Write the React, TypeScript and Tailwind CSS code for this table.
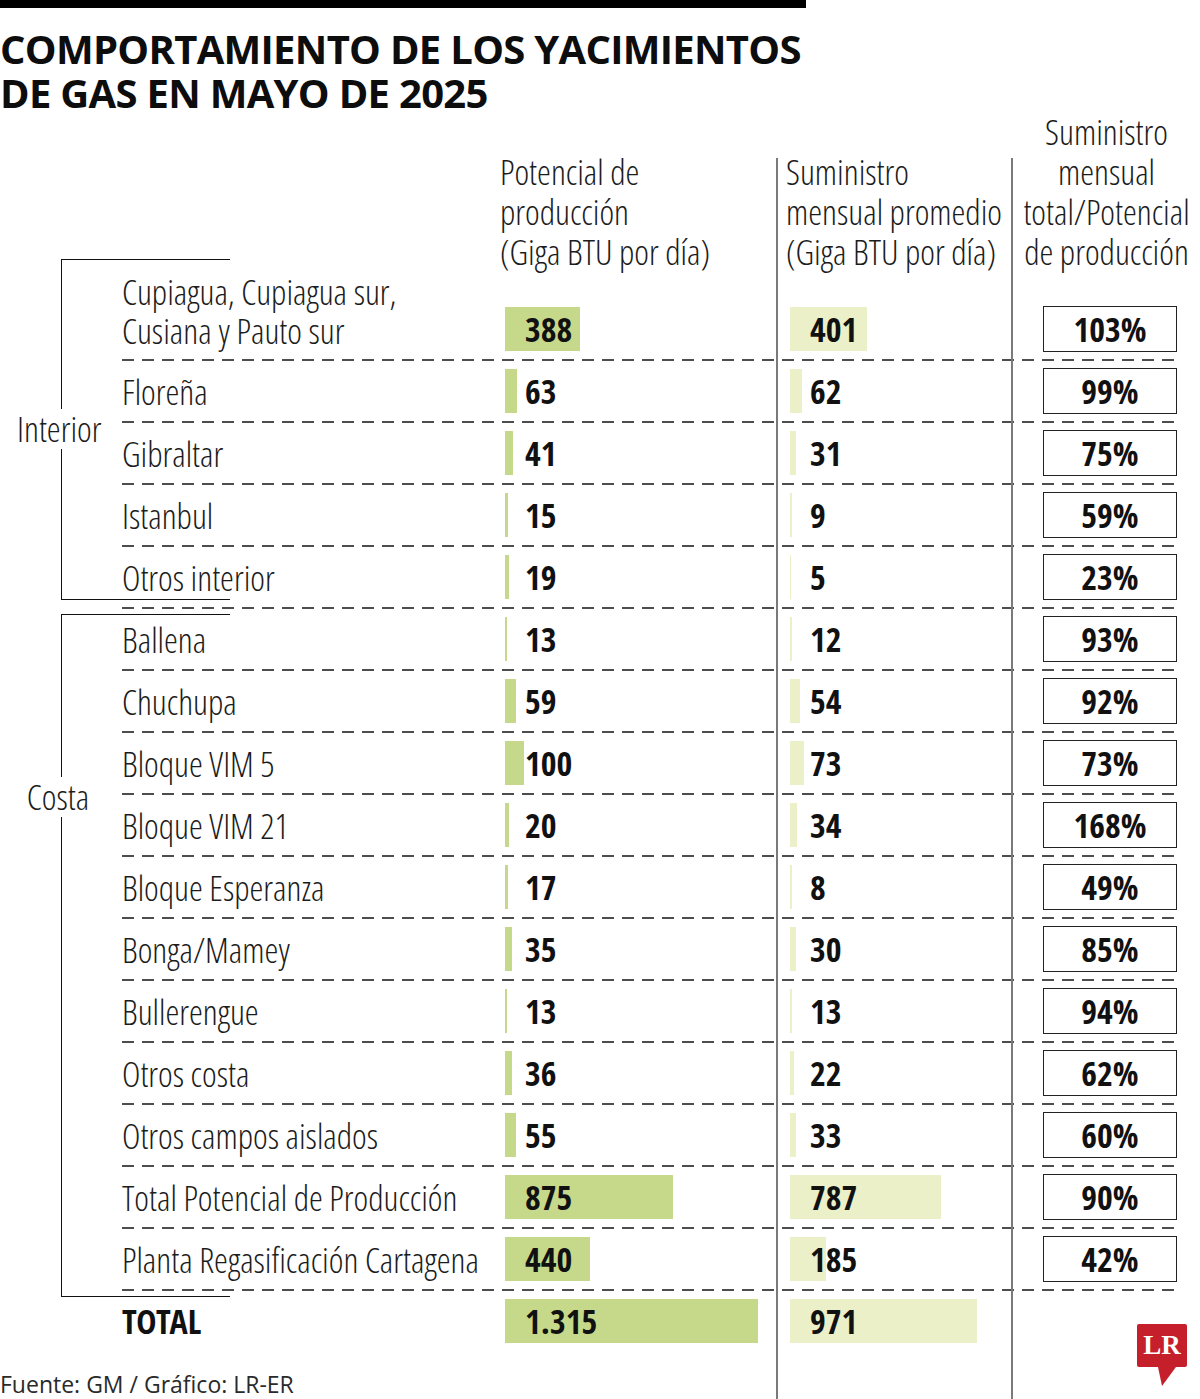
import React from "react"

type Row = {
  name: string[]
  p: number
  pLabel: string
  s: number
  r?: string
  bold?: boolean
}

const rows: Row[] = [
  { name: ["Cupiagua, Cupiagua sur,", "Cusiana y Pauto sur"], p: 388, pLabel: "388", s: 401, r: "103%" },
  { name: ["Floreña"], p: 63, pLabel: "63", s: 62, r: "99%" },
  { name: ["Gibraltar"], p: 41, pLabel: "41", s: 31, r: "75%" },
  { name: ["Istanbul"], p: 15, pLabel: "15", s: 9, r: "59%" },
  { name: ["Otros interior"], p: 19, pLabel: "19", s: 5, r: "23%" },
  { name: ["Ballena"], p: 13, pLabel: "13", s: 12, r: "93%" },
  { name: ["Chuchupa"], p: 59, pLabel: "59", s: 54, r: "92%" },
  { name: ["Bloque VIM 5"], p: 100, pLabel: "100", s: 73, r: "73%" },
  { name: ["Bloque VIM 21"], p: 20, pLabel: "20", s: 34, r: "168%" },
  { name: ["Bloque Esperanza"], p: 17, pLabel: "17", s: 8, r: "49%" },
  { name: ["Bonga/Mamey"], p: 35, pLabel: "35", s: 30, r: "85%" },
  { name: ["Bullerengue"], p: 13, pLabel: "13", s: 13, r: "94%" },
  { name: ["Otros costa"], p: 36, pLabel: "36", s: 22, r: "62%" },
  { name: ["Otros campos aislados"], p: 55, pLabel: "55", s: 33, r: "60%" },
  { name: ["Total Potencial de Producción"], p: 875, pLabel: "875", s: 787, r: "90%" },
  { name: ["Planta Regasificación Cartagena"], p: 440, pLabel: "440", s: 185, r: "42%" },
  { name: ["TOTAL"], p: 1315, pLabel: "1.315", s: 971, bold: true },
]

// px per Giga BTU
const SCALE = 0.1923

const narrow = "font-['Open_Sans_Condensed','Open_Sans',sans-serif] font-stretch-condensed font-bold"
const light = "font-['Open_Sans',sans-serif] font-stretch-condensed font-light"
const dash =
  "bg-[repeating-linear-gradient(to_right,#4d4d4d_0px,#4d4d4d_12px,transparent_12px,transparent_20px)] bg-no-repeat bg-[length:1058px_2px] bg-[position:0_100%]"

const Bar = ({ value, label, color }: { value: number; label: string; color: string }) => (
  <div className="grid">
    <div className={`col-start-1 row-start-1 h-[44px] ${color}`} style={{ width: Math.max(1, value * SCALE) }} />
    <div className={`col-start-1 row-start-1 self-center pl-[20px] text-[34px] leading-none text-[#111] ${narrow}`}>
      {label}
    </div>
  </div>
)

const DataRow = ({ row, index, last }: { row: Row; index: number; last: boolean }) => {
  const first = index === 0
  const align = first ? "items-end pb-[10px]" : "items-center pb-[2px]"
  return (
    <div className={`flex ${first ? "h-[89px]" : "h-[62px]"} ${last ? "" : dash}`}>
      <div
        className={`flex w-[378px] whitespace-nowrap ${first ? "items-start" : "items-center pb-[2px]"} ${
          row.bold ? `text-[34px] text-[#111] ${narrow}` : `text-[35px] leading-[39px] text-[#1c1c1c] ${light}`
        }`}
      >
        <div>
          {row.name.map((n) => (
            <div key={n}>{n}</div>
          ))}
        </div>
      </div>
      <div className={`flex w-[276px] pl-[5px] ${align}`}>
        <Bar value={row.p} label={row.pLabel} color="bg-[#c6d98b]" />
      </div>
      <div className={`flex w-[235px] border-l-2 border-[#7a7a7a] pl-[12px] ${align}`}>
        <Bar value={row.s} label={String(row.s)} color="bg-[#ebf0c9]" />
      </div>
      <div className={`flex w-[189px] border-l-2 border-[#7a7a7a] pl-[30px] ${first ? "items-end pb-[9px]" : "items-center pb-[2px]"}`}>
        {row.r && (
          <div
            className={`flex h-[46px] w-[134px] items-center justify-center border-[1.5px] border-[#222] text-[34px] leading-none text-[#111] ${narrow}`}
          >
            {row.r}
          </div>
        )}
      </div>
    </div>
  )
}

const Bracket = ({ label, height, labelTop }: { label: string; height: string; labelTop: string }) => (
  <div className={`ml-[61px] w-[169px] border-y-[1.5px] border-l-[1.5px] border-[#111] ${height}`}>
    <div
      className={`-ml-[45px] w-[82px] bg-white text-center text-[35px] leading-[40px] text-[#1c1c1c] ${light} ${labelTop}`}
    >
      {label}
    </div>
  </div>
)

const LrLogo = () => (
  <div className="flex flex-col">
    <div className="flex h-[43px] w-[50px] items-center justify-center rounded-[2px] bg-[#c61f2c] font-['Liberation_Serif',serif] text-[27px] font-bold leading-none text-white">
      LR
    </div>
    <svg width="50" height="19" viewBox="0 0 50 19">
      <polygon points="21,0 39,0 25,19" fill="#c61f2c" />
    </svg>
  </div>
)

export default function App() {
  return (
    <div className="h-[1399px] w-[1200px] overflow-hidden bg-white">
      <div className="h-[8px] w-[806px] bg-black" />
      <div className="h-[105px] pt-[19px]">
        <h1 className="font-['Open_Sans',sans-serif] text-[40px] font-bold leading-[44px] tracking-[-0.7px] text-[#0d0d0d]">
          COMPORTAMIENTO DE LOS YACIMIENTOS
          <br />
          DE GAS EN MAYO DE 2025
        </h1>
      </div>

      <div className="flex">
        <div className="w-[122px] shrink-0 pt-[146px]">
          <Bracket label="Interior" height="h-[341px]" labelTop="mt-[149px]" />
          <div className="h-[14px]" />
          <Bracket label="Costa" height="h-[683px]" labelTop="mt-[162px]" />
        </div>

        <div className="w-[1078px]">
          <div className={`flex h-[159px] whitespace-nowrap text-[35px] leading-[40px] text-[#1c1c1c] ${light}`}>
            <div className="w-[378px]" />
            <div className="flex w-[276px] flex-col justify-end">
              <div>Potencial de</div>
              <div>producción</div>
              <div>(Giga BTU por día)</div>
            </div>
            <div className="mt-[45px] flex w-[235px] flex-col justify-end border-l-2 border-[#7a7a7a] pl-[8px]">
              <div>Suministro</div>
              <div>mensual promedio</div>
              <div>(Giga BTU por día)</div>
            </div>
            <div className="mt-[45px] flex w-[189px] flex-col items-center justify-end border-l-2 border-[#7a7a7a]">
              <div>Suministro</div>
              <div>mensual</div>
              <div>total/Potencial</div>
              <div>de producción</div>
            </div>
          </div>

          {rows.map((row, i) => (
            <DataRow key={row.name[0]} row={row} index={i} last={i === rows.length - 1} />
          ))}
        </div>
      </div>

      <div className="flex h-[46px]">
        <div className="flex w-[776px] items-end pb-[1px] font-['Open_Sans',sans-serif] text-[23px] leading-[28px] text-[#2a2a2a]">
          Fuente: GM / Gráfico: LR-ER
        </div>
        <div className="w-[235px] border-l-2 border-[#7a7a7a]" />
        <div className="flex w-[189px] justify-end border-l-2 border-[#7a7a7a] pr-[13px]">
          <div className="-mt-[29px]">
            <LrLogo />
          </div>
        </div>
      </div>
    </div>
  )
}
